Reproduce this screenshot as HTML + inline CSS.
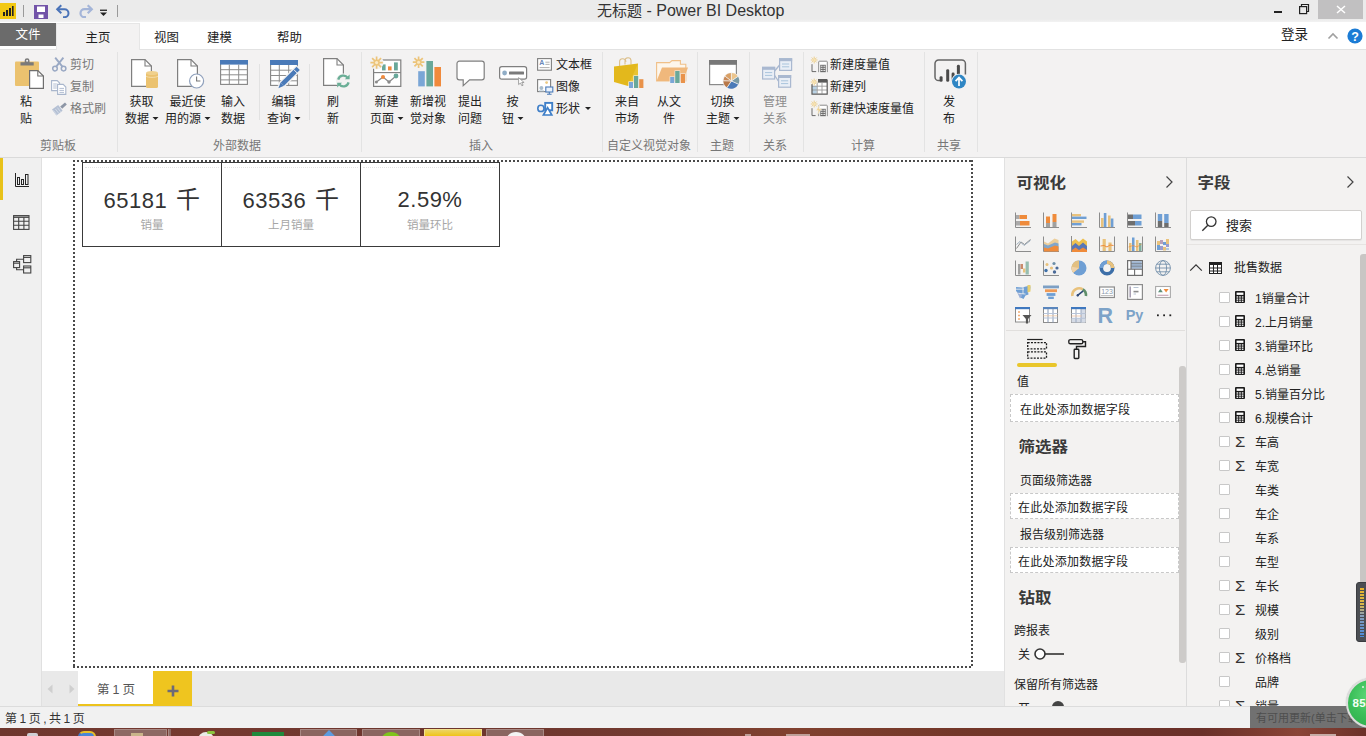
<!DOCTYPE html>
<html lang="zh-CN">
<head>
<meta charset="utf-8">
<title>无标题 - Power BI Desktop</title>
<style>
*{box-sizing:border-box;margin:0;padding:0}
html,body{width:1366px;height:736px;overflow:hidden;background:#f0f0f0}
body{position:relative;font-family:"Liberation Sans","Noto Sans CJK SC",sans-serif;font-size:12px;color:#222;line-height:1}
.abs{position:absolute}
/* title bar */
#titlebar{position:absolute;left:0;top:0;width:1366px;height:22px;background:linear-gradient(#ebebeb 0,#ebebeb 19px,#f2f2f2 22px)}
#title{position:absolute;left:597px;top:1px;font-size:16px;line-height:20px;color:#333;white-space:nowrap}
#title b{font-weight:normal;font-size:15px}
/* tab row */
#tabrow{position:absolute;left:0;top:22px;width:1366px;height:27px;background:#fff}
#filetab{position:absolute;left:0;top:1px;width:56px;height:23px;background:#6b6b6b;color:#fff;font-size:12.5px;line-height:25px;text-align:center}
#hometab{position:absolute;left:56px;top:1px;width:84px;height:27px;background:#f3f2f2;border:1px solid #e6e6e6;border-bottom:none;z-index:2}
#tabrow{z-index:2}
.tab{z-index:3}
.tab{position:absolute;top:7.5px;font-size:12.4px;line-height:16px;color:#222;white-space:nowrap}
/* ribbon */
#ribbon{position:absolute;left:0;top:49px;width:1366px;height:109px;background:#f3f2f2;border-top:1px solid #e2e2e2;border-bottom:1px solid #dadada}
#hometab + .x{}
.gsep{position:absolute;top:52px;width:1px;height:100px;background:#e3e3e3}
.ssep{position:absolute;top:64px;width:1px;height:56px;background:#e2e2e2}
.big{position:absolute;top:94px;text-align:center;font-size:12px;line-height:16.5px;color:#222;white-space:nowrap;transform:translateX(-50%)}
.big.dis{color:#8c8c8c}
.sm{position:absolute;font-size:12px;line-height:16px;color:#222;white-space:nowrap}
.sm.dis{color:#787878}
.glab{position:absolute;top:138px;font-size:12px;line-height:16px;color:#777;white-space:nowrap;transform:translateX(-50%)}
.dd{display:inline-block;width:0;height:0;border-left:3px solid transparent;border-right:3px solid transparent;border-top:3.5px solid #222;vertical-align:middle;margin-left:3px;position:relative;top:-1px}
/* left nav */
#leftnav{position:absolute;left:0;top:158px;width:42px;height:548px;background:#f0f0f0;border-right:1px solid #e0e0e0}
/* canvas */
#canvas{position:absolute;left:42px;top:158px;width:963px;height:513px;background:#fff}
#page{position:absolute;left:73px;top:160px;width:900px;height:508px;
background:
 repeating-linear-gradient(90deg,#4a4a4a 0,#4a4a4a 2px,transparent 2px,transparent 4px) top left/100% 2px no-repeat,
 repeating-linear-gradient(90deg,#4a4a4a 0,#4a4a4a 2px,transparent 2px,transparent 4px) bottom left/100% 2px no-repeat,
 repeating-linear-gradient(180deg,#4a4a4a 0,#4a4a4a 2px,transparent 2px,transparent 4px) top left/2px 100% no-repeat,
 repeating-linear-gradient(180deg,#4a4a4a 0,#4a4a4a 2px,transparent 2px,transparent 4px) top right/2px 100% no-repeat}
.card{position:absolute;top:162px;height:85px;width:140px;border:1px solid #3a3a3a;background:#fff;text-align:center}
.card:after{content:"";position:absolute;left:2px;right:2px;top:4px;border-top:1px dotted #e6e6e6}
.card .v{position:absolute;left:0;right:0;top:23px;font-size:22px;line-height:28px;color:#333;letter-spacing:.5px;white-space:nowrap}
.card .v b{font-weight:normal;font-size:24px;margin-left:2px;position:relative;top:0px}
.card .l{position:absolute;left:0;right:0;top:54px;font-size:11.5px;line-height:16px;color:#a6a6a6}
/* page tabs */
#pagetabs{position:absolute;left:42px;top:671px;width:963px;height:35px;background:#e9e9e9}
#ptab{position:absolute;left:78px;top:671px;width:75px;height:35px;background:#fff;border-bottom:2px solid #edc31c;text-align:center;font-size:12.5px;line-height:39px;color:#555;padding-left:1px}
#ptab i,#status i{font-style:normal;padding:0 2.5px}
#ptab i{padding:0 3px}
#padd{position:absolute;left:153px;top:671px;width:39px;height:35px;background:#efc51f}
/* status bar */
#status{position:absolute;left:0;top:706px;width:1366px;height:22px;background:#f1f1f1;border-top:1px solid #dcdcdc;font-size:12px;line-height:24px;padding-left:5px;color:#333}
#taskbar{position:absolute;left:0;top:728px;width:1366px;height:8px;overflow:hidden;background:linear-gradient(90deg,#6e372e 0,#763a30 15%,#6c352d 30%,#733a30 48%,#81412f 58%,#733729 70%,#6a3029 88%,#7c3b30 92%,#8a4537 95%,#6c3129 100%)}
/* right panes */
#vis{position:absolute;left:1004px;top:158px;width:182px;height:548px;background:#f3f2f1;border-left:1px solid #e1e1e1}
#fields{position:absolute;left:1186px;top:158px;width:180px;height:548px;background:#f3f2f1;border-left:1px solid #dcdcdc}
.ph{position:absolute;font-size:16.5px;font-weight:bold;line-height:20px;color:#3a3a3a;white-space:nowrap;transform:scaleY(.93);transform-origin:0 50%}
.fld{position:absolute;left:1255px;font-size:12px;line-height:16px;color:#222;white-space:nowrap}
.cb{position:absolute;left:1219px;width:11px;height:11px;border:1px solid #c8c8c8;background:#fff;border-radius:1px}
.sig{position:absolute;left:1235px;font-size:14.5px;line-height:16px;color:#333;transform:scaleX(1.15);transform-origin:0 50%}
.well{position:absolute;left:1010px;width:169px;height:27px;background:#fff;border:1px dashed #c8c8c8;font-size:12px;line-height:29px;letter-spacing:.25px;padding-left:7px;color:#222;white-space:nowrap}
.vt{position:absolute;font-size:12px;line-height:16px;color:#222;white-space:nowrap}
</style>
</head>
<body>
<div id="titlebar">
 <div id="title"><b>无标题</b> - Power BI Desktop</div>
</div>
<div id="tabrow">
 <div id="filetab">文件</div>
 <div id="hometab"></div>
 <div class="tab" style="left:85.5px">主页</div>
 <div class="tab" style="left:154px">视图</div>
 <div class="tab" style="left:207px">建模</div>
 <div class="tab" style="left:277px">帮助</div>
 <div class="tab" style="left:1281px;font-size:13.5px;top:5px">登录</div>
</div>
<div id="ribbon"></div>
<!-- title bar icons -->
<svg class="abs" style="left:0;top:3px" width="16" height="16" viewBox="0 0 16 16"><rect width="16" height="16" fill="#f2c811"/><rect x="3" y="9" width="2" height="4" fill="#222"/><rect x="6" y="7" width="2" height="6" fill="#222"/><rect x="9" y="5" width="2" height="8" fill="#222"/><rect x="12" y="3" width="1.6" height="10" fill="#222"/></svg>
<div class="abs" style="left:23px;top:5px;width:1px;height:12px;background:#9a9a9a"></div>
<svg class="abs" style="left:34px;top:5px" width="14" height="14" viewBox="0 0 14 14"><path d="M0.8 0.8h12.4v12.4H0.8z" fill="#fff" stroke="#7253a8" stroke-width="1.6"/><rect x="1" y="7" width="12" height="6" fill="#7253a8"/><rect x="4.5" y="9.5" width="5" height="3.5" fill="#fff"/><rect x="1" y="1" width="2" height="6" fill="#7253a8"/><rect x="11" y="1" width="2" height="6" fill="#7253a8"/></svg>
<svg class="abs" style="left:55px;top:4px" width="16" height="14" viewBox="0 0 16 14"><path d="M2 5.2h7.5a4 4 0 0 1 0 8H8" fill="none" stroke="#4a73b8" stroke-width="2"/><path d="M6.3 1.2L2.2 5.2l4.1 4" fill="none" stroke="#4a73b8" stroke-width="2"/></svg>
<svg class="abs" style="left:78px;top:4px" width="16" height="14" viewBox="0 0 16 14"><path d="M14 5.2H6.5a4 4 0 0 0 0 8H8" fill="none" stroke="#a4b5d8" stroke-width="2.200"/><path d="M9.7 1.2l4.1 4-4.1 4" fill="none" stroke="#a4b5d8" stroke-width="2.200"/></svg>
<svg class="abs" style="left:99px;top:9px" width="9" height="8" viewBox="0 0 9 8"><rect x="1" y="0.6" width="7" height="1.3" fill="#222"/><path d="M1 3.4h7L4.5 7z" fill="#222"/></svg>
<div class="abs" style="left:117px;top:5px;width:1px;height:12px;background:#9a9a9a"></div>
<!-- window controls -->
<div class="abs" style="left:1318px;top:0;width:45px;height:19px;background:#c1c0c1"></div>
<svg class="abs" style="left:1336px;top:5px" width="10" height="9" viewBox="0 0 10 9"><path d="M1 1l8 7M9 1l-8 7" stroke="#fff" stroke-width="1.500"/></svg>
<div class="abs" style="left:1274px;top:11px;width:8px;height:2px;background:#222"></div>
<svg class="abs" style="left:1298px;top:3px" width="12" height="12" viewBox="0 0 12 12"><path d="M3.5 3V1.5h7v7H9" fill="none" stroke="#222" stroke-width="1.2"/><rect x="1.6" y="3.6" width="7" height="7" fill="none" stroke="#222" stroke-width="1.2"/></svg>
<!-- tab row right -->
<svg class="abs" style="left:1327px;top:32px;z-index:3" width="12" height="8" viewBox="0 0 12 8"><path d="M1.5 6.5L6 2l4.5 4.5" fill="none" stroke="#a0a0a0" stroke-width="1.6"/></svg>
<svg class="abs" style="left:1347px;top:28px;z-index:3" width="16" height="16" viewBox="0 0 16 16"><circle cx="8" cy="8" r="7.6" fill="#1c7cd5"/><text x="8" y="12.6" font-size="12.5" font-weight="bold" text-anchor="middle" fill="#fff" font-family="Liberation Sans, sans-serif">?</text></svg>

<!-- separators -->
<div class="gsep" style="left:117px"></div>
<div class="ssep" style="left:259px"></div>
<div class="ssep" style="left:309px"></div>
<div class="gsep" style="left:361px"></div>
<div class="gsep" style="left:602px"></div>
<div class="gsep" style="left:697px"></div>
<div class="gsep" style="left:749px"></div>
<div class="gsep" style="left:803px"></div>
<div class="gsep" style="left:924px"></div>
<div class="gsep" style="left:977px"></div>

<!-- big labels -->
<div class="big" style="left:26px">粘<br>贴</div>
<div class="big" style="left:141.5px">获取<br>数据<i class="dd"></i></div>
<div class="big" style="left:187.5px">最近使<br>用的源<i class="dd"></i></div>
<div class="big" style="left:233px">输入<br>数据</div>
<div class="big" style="left:283.5px">编辑<br>查询<i class="dd"></i></div>
<div class="big" style="left:333px">刷<br>新</div>
<div class="big" style="left:386.5px">新建<br>页面<i class="dd"></i></div>
<div class="big" style="left:428px">新增视<br>觉对象</div>
<div class="big" style="left:470px">提出<br>问题</div>
<div class="big" style="left:512.5px">按<br>钮<i class="dd"></i></div>
<div class="big" style="left:627px">来自<br>市场</div>
<div class="big" style="left:669px">从文<br>件</div>
<div class="big" style="left:722.5px">切换<br>主题<i class="dd"></i></div>
<div class="big dis" style="left:775px">管理<br>关系</div>
<div class="big" style="left:949px">发<br>布</div>

<!-- small labels -->
<div class="sm dis" style="left:70px;top:57px">剪切</div>
<div class="sm dis" style="left:70px;top:79px">复制</div>
<div class="sm dis" style="left:70px;top:101px">格式刷</div>
<div class="sm" style="left:556px;top:57px">文本框</div>
<div class="sm" style="left:556px;top:79px">图像</div>
<div class="sm" style="left:556px;top:101px">形状<i class="dd" style="margin-left:5px"></i></div>
<div class="sm" style="left:830px;top:57px">新建度量值</div>
<div class="sm" style="left:830px;top:79px">新建列</div>
<div class="sm" style="left:830px;top:101px">新建快速度量值</div>

<!-- group labels -->
<div class="glab" style="left:58px">剪贴板</div>
<div class="glab" style="left:237px">外部数据</div>
<div class="glab" style="left:481px">插入</div>
<div class="glab" style="left:649px">自定义视觉对象</div>
<div class="glab" style="left:722px">主题</div>
<div class="glab" style="left:775px">关系</div>
<div class="glab" style="left:863px">计算</div>
<div class="glab" style="left:949px">共享</div>

<!-- RI-START -->
<svg class="abs" style="left:15px;top:58px;overflow:visible" width="30" height="32" viewBox="0 0 30 32"><rect x="0" y="3.5" width="24" height="24.5" rx="1" fill="#ebc26f"/><path d="M5.5 7.5V4.2h4.2V2.6a2.4 2.4 0 0 1 4.8 0v1.6h4.2v3.3z" fill="#7a7a7a"/><circle cx="12.1" cy="2.7" r="1" fill="#f3f2f2"/><path d="M14.6 12.6h8.2l5.6 5.4v12.3H14.6z" fill="#fff" stroke="#6f6f6f" stroke-width="1.2"/><path d="M22.8 12.6v5.4h5.6" fill="none" stroke="#6f6f6f" stroke-width="1.1"/></svg>
<svg class="abs" style="left:52px;top:57px;overflow:visible" width="15" height="15" viewBox="0 0 15 15"><g fill="none" stroke="#9aa9c4" stroke-width="1.5"><circle cx="3" cy="11.6" r="2.3"/><circle cx="11.6" cy="11.6" r="2.3"/></g><path d="M3.2 0.6L10.6 9.8M11.4 0.6L4 9.8" stroke="#9aa9c4" stroke-width="1.9"/></svg>
<svg class="abs" style="left:51px;top:80px;overflow:visible" width="16" height="15" viewBox="0 0 16 15"><path d="M0.6 0.6h5.6l2.4 2.4v7.6h-8z" fill="#fff" stroke="#a9b6cc" stroke-width="1.1"/><path d="M2.2 4h3.6M2.2 6h3.6M2.2 8h3.6" stroke="#a9b6cc" stroke-width=".9"/><path d="M6.6 4.4h5.6l2.6 2.6v7.4h-8.2z" fill="#fff" stroke="#a9b6cc" stroke-width="1.1"/><path d="M8.4 8.4h4.6M8.4 10.4h4.6M8.4 12.4h4.6" stroke="#a9b6cc" stroke-width=".9"/></svg>
<svg class="abs" style="left:51px;top:101px;overflow:visible" width="17" height="16" viewBox="0 0 17 16"><path d="M1 8.4L7.2 4l4.4 5.8-6.2 4.8z" fill="#b4c0d4"/><path d="M2.4 9.4l3.4 4.4M4.4 8l3.4 4.4M6.4 6.6l3.2 4.2" stroke="#dfe5ee" stroke-width=".7"/><path d="M9.2 5.6L14 1.4l1.8 2.2-4.6 4.2z" fill="#8d96a6"/></svg>
<svg class="abs" style="left:131px;top:59px;overflow:visible" width="28" height="30" viewBox="0 0 28 30"><path d="M0.6 0.6H14L20.4 7V27.4H0.6z" fill="#fff" stroke="#7f7f7f" stroke-width="1.2"/><path d="M14 0.6V7H20.4" fill="none" stroke="#7f7f7f" stroke-width="1.1"/><rect x="15" y="13.4" width="12" height="15.6" rx="1.6" fill="#ebc26f"/><ellipse cx="21" cy="14" rx="6" ry="2" fill="#f0d08c"/><path d="M15 17.2c2 1.6 10 1.6 12 0" fill="none" stroke="#f5dfae" stroke-width=".9"/></svg>
<svg class="abs" style="left:177px;top:59px;overflow:visible" width="28" height="30" viewBox="0 0 28 30"><path d="M0.6 0.6H14L20.4 7V27.4H0.6z" fill="#fff" stroke="#7f7f7f" stroke-width="1.2"/><path d="M14 0.6V7H20.4" fill="none" stroke="#7f7f7f" stroke-width="1.1"/><circle cx="19.6" cy="22" r="7" fill="#fff" stroke="#8fa0bc" stroke-width="1.2"/><path d="M19.6 17.4V22h3.8" fill="none" stroke="#777" stroke-width="1.1"/></svg>
<svg class="abs" style="left:220px;top:60px;overflow:visible" width="28" height="25" viewBox="0 0 28 25"><rect x="0.6" y="0.6" width="26.8" height="23.8" fill="#fff" stroke="#858585" stroke-width="1.1"/><rect x="0" y="0" width="28" height="4.6" fill="#4a7ab8"/><path d="M0.6 9.7H27.4" stroke="#8d8d8d" stroke-width="1"/><path d="M0.6 14.8H27.4" stroke="#8d8d8d" stroke-width="1"/><path d="M0.6 19.9H27.4" stroke="#8d8d8d" stroke-width="1"/><path d="M9.3 4.6V24.4" stroke="#8d8d8d" stroke-width="1"/><path d="M18.7 4.6V24.4" stroke="#8d8d8d" stroke-width="1"/></svg>
<svg class="abs" style="left:270px;top:60px;overflow:visible" width="30" height="30" viewBox="0 0 30 30"><rect x="0.6" y="0.6" width="26.8" height="24.8" fill="#fff" stroke="#858585" stroke-width="1.1"/><rect x="0" y="0" width="28" height="5" fill="#4a7ab8"/><path d="M0.6 10.2H27.4" stroke="#8d8d8d" stroke-width="1"/><path d="M0.6 15.5H27.4" stroke="#8d8d8d" stroke-width="1"/><path d="M0.6 20.8H27.4" stroke="#8d8d8d" stroke-width="1"/><path d="M9.3 5V25.4" stroke="#8d8d8d" stroke-width="1"/><path d="M18.7 5V25.4" stroke="#8d8d8d" stroke-width="1"/><path d="M29 7.600L9.600 27" stroke="#f3f2f2" stroke-width="7.400"/><path d="M28.200 8.400L12.400 24.200" stroke="#4a7ab8" stroke-width="4.600"/><path d="M10.600 22.400l3.400 3.400-5.600 2.400z" fill="#4a7ab8"/><path d="M23.600 9.400l3.800 3.800" stroke="#f3f2f2" stroke-width="1"/></svg>
<svg class="abs" style="left:323px;top:58px;overflow:visible" width="30" height="31" viewBox="0 0 30 31"><path d="M0.6 0.6H14L20.4 7V27.4H0.6z" fill="#fff" stroke="#7f7f7f" stroke-width="1.2"/><path d="M14 0.6V7H20.4" fill="none" stroke="#7f7f7f" stroke-width="1.1"/><circle cx="20.4" cy="23" r="7.6" fill="#f3f2f2"/><g fill="none" stroke="#6aae96" stroke-width="2.3"><path d="M15.2 21.6a5.4 5.4 0 0 1 9.6-1.8"/><path d="M25.6 24.4a5.4 5.4 0 0 1-9.6 1.8"/></g><path d="M26.6 16.4v4.8h-4.8z" fill="#6aae96"/><path d="M14.2 29.6v-4.8h4.8z" fill="#6aae96"/></svg>
<svg class="abs" style="left:370px;top:56px;overflow:visible" width="32" height="31" viewBox="0 0 32 31"><rect x="3.6" y="4" width="27.2" height="26.4" fill="#fff" stroke="#7f7f7f" stroke-width="1.2"/><path d="M3.6 16.6h27.2" stroke="#7f7f7f" stroke-width="1.1"/><rect x="12" y="8.4" width="3.6" height="6" fill="#69a89a"/><rect x="18" y="10.4" width="3.6" height="4" fill="#f08a3c"/><rect x="24" y="6.4" width="3.8" height="8" fill="#69a89a"/><path d="M6.4 26l6.6-5 6 5 7-6" fill="none" stroke="#8a8a8a" stroke-width="1.3"/><circle cx="6.4" cy="26" r="1.5" fill="#8a8a8a"/><circle cx="13" cy="21" r="2" fill="#f08a3c"/><circle cx="19" cy="26" r="1.7" fill="#8a8a8a"/><circle cx="26" cy="20" r="2.4" fill="#69a89a"/><circle cx="6.6" cy="6.6" r="7" fill="#f3f2f2"/><g stroke="#ecc47a" stroke-width="1.7"><path d="M0.39999999999999947 6.6H12.8M6.6 0.39999999999999947V12.8M2.136 2.136L11.064 11.064M2.136 11.064L11.064 2.136"/></g><circle cx="6.6" cy="6.6" r="3.1" fill="#ecc47a"/><circle cx="6.6" cy="6.6" r="1.612" fill="#fbe9c4"/></svg>
<svg class="abs" style="left:412px;top:56px;overflow:visible" width="30" height="31" viewBox="0 0 30 31"><g stroke="#ecc47a" stroke-width="1.7"><path d="M0.7999999999999998 6.2H12.399999999999999M6.6 0.40000000000000036V12.0M2.4239999999999995 2.024L10.776 10.376000000000001M2.4239999999999995 10.376000000000001L10.776 2.024"/></g><circle cx="6.6" cy="6.2" r="2.9" fill="#ecc47a"/><circle cx="6.6" cy="6.2" r="1.508" fill="#fbe9c4"/><rect x="6.2" y="15.2" width="6.6" height="15.2" fill="#7aa6d6"/><rect x="14.4" y="5" width="6.6" height="25.4" fill="#69a89a"/><rect x="22.4" y="11" width="6.6" height="19.4" fill="#f08a3c"/></svg>
<svg class="abs" style="left:456px;top:60px;overflow:visible" width="30" height="27" viewBox="0 0 30 27"><path d="M3.4 1.2h22.4a2.4 2.4 0 0 1 2.4 2.4v13.8a2.4 2.4 0 0 1-2.4 2.4H13.6L7.2 25.6V19.8H3.4a2.4 2.4 0 0 1-2.4-2.4V3.6a2.4 2.4 0 0 1 2.4-2.4z" fill="#fff" stroke="#7f7f7f" stroke-width="1.2"/></svg>
<svg class="abs" style="left:499px;top:66px;overflow:visible" width="30" height="21" viewBox="0 0 30 21"><rect x="0.6" y="0.6" width="27" height="12.6" rx="2.2" fill="#fff" stroke="#7f7f7f" stroke-width="1.2"/><circle cx="5.6" cy="7" r="2.4" fill="#90adc6"/><rect x="10" y="5.4" width="15" height="3.2" rx="0.6" fill="#7a7a7a"/><path d="M19.6 11.6v7l1.8-1.6 1.5 2.8 1.2-.6-1.4-2.7h2.4z" fill="#fff" stroke="#999" stroke-width=".9"/></svg>
<svg class="abs" style="left:537px;top:58px;overflow:visible" width="16" height="13" viewBox="0 0 16 13"><rect x="0.6" y="0.6" width="13.800" height="11.600" fill="#fff" stroke="#7f7f7f" stroke-width="1.1"/><text x="2.200" y="7.400" font-size="7" font-weight="bold" fill="#6a88b8" font-family="Liberation Sans, sans-serif">A</text><path d="M8.400 4.200h4.200M8.400 6.400h4.200M2.600 9.600h10" stroke="#a8a8a8" stroke-width=".9"/></svg>
<svg class="abs" style="left:537px;top:79px;overflow:visible" width="17" height="16" viewBox="0 0 17 16"><rect x="0.6" y="0.6" width="13" height="12" fill="#fff" stroke="#7f7f7f" stroke-width="1.1"/><circle cx="4.4" cy="9" r="2" fill="#a9bccc"/><path d="M2 12h5" stroke="#a9bccc"/><circle cx="9.6" cy="3.6" r="1.4" fill="#ecc982"/><rect x="8.800" y="8" width="7" height="5" fill="#eaf2fb" stroke="#4a7ab8" stroke-width="1.1"/><path d="M12.300 13v2M10 15.200h4.600" stroke="#4a7ab8" stroke-width="1.1"/></svg>
<svg class="abs" style="left:537px;top:102px;overflow:visible" width="17" height="15" viewBox="0 0 17 15"><circle cx="3.900" cy="6.400" r="3.100" fill="none" stroke="#3f7fc8" stroke-width="1.600"/><rect x="8.200" y="0.900" width="7" height="7.400" fill="#fff" stroke="#3f7fc8" stroke-width="1.900"/><path d="M10.600 5.600l4.200 7.400H6.400z" fill="#fff" stroke="#3f7fc8" stroke-width="1.700"/></svg>
<svg class="abs" style="left:613px;top:56px;overflow:visible" width="32" height="33" viewBox="0 0 32 33"><path d="M6.6 10.4V6.2a3.2 3.2 0 0 1 6.4-.4M12 8.6V4.8a3 3 0 0 1 6-.2v4" fill="none" stroke="#dcbf8a" stroke-width="1.1"/><path d="M1 10.6L25 7.4v17.4L15 30 1 26z" fill="#e3b81c"/><path d="M25 7.4v17.4L15 30z" fill="#e9c332"/><rect x="15.4" y="25.4" width="5" height="7" fill="#f3f2f2"/><rect x="20.4" y="19.4" width="5.4" height="13" fill="#f3f2f2"/><rect x="25.6" y="22.6" width="5.4" height="10" fill="#f3f2f2"/><rect x="16" y="26" width="4" height="6" fill="#7aa6d6"/><rect x="21" y="20" width="4.2" height="12" fill="#69a89a"/><rect x="26.2" y="23.2" width="4.2" height="8.8" fill="#e9924a"/></svg>
<svg class="abs" style="left:656px;top:60px;overflow:visible" width="33" height="25" viewBox="0 0 33 25"><path d="M0.6 2.6h13l2.4-2h8.4v3.6h5.4V21H0.6z" fill="#fdf6ec" stroke="#f0c088" stroke-width="1.1"/><path d="M0.6 21L6 7.6h26L27 21z" fill="#f0b87c"/><rect x="13.6" y="16.4" width="5" height="7" fill="#f3f2f2" opacity=".9"/><rect x="18.6" y="10.4" width="5.6" height="13" fill="#f3f2f2" opacity=".9"/><rect x="24.2" y="13.4" width="5.4" height="10" fill="#f3f2f2" opacity=".9"/><rect x="14.2" y="17" width="4" height="6" fill="#7aa6d6"/><rect x="19.2" y="11" width="4.4" height="12" fill="#69a89a"/><rect x="24.8" y="14" width="4.2" height="9" fill="#e9924a"/></svg>
<svg class="abs" style="left:709px;top:60px;overflow:visible" width="32" height="30" viewBox="0 0 32 30"><rect x="0.6" y="0.6" width="26.8" height="24" fill="#fff" stroke="#8a8a8a" stroke-width="1.2"/><rect x="0" y="0" width="28" height="4.8" fill="#787878"/><circle cx="22.4" cy="21" r="8.8" fill="#f3f2f2"/><path d="M22.4 21V13a8 8 0 0 0-6.4 3.2z" fill="#d9a066"/><path d="M22.4 21V13a8 8 0 0 1 6.6 3.4z" fill="#ecc58c"/><path d="M22.4 21l6.6-4.6a8 8 0 0 1 .4 7.8z" fill="#7a9aa4"/><path d="M22.4 21l7 3.2a8 8 0 0 1-11.4 3.4z" fill="#4a7ab8"/><path d="M22.4 21l-4.4 6.600a8 8 0 0 1-3.600-6.600z" fill="#b87848"/><path d="M22.4 21l-8-.2a8 8 0 0 1 1.600-4.600z" fill="#c98a58"/><path d="M22.400 21V13M22.400 21l6.600-4.600M22.400 21l7 3.200M22.400 21l-4.400 6.600M22.400 21l-8-.2M22.400 21l-6.400-4.800" stroke="#f3f2f2" stroke-width=".8"/></svg>
<svg class="abs" style="left:762px;top:58px;overflow:visible" width="31" height="30" viewBox="0 0 31 30"><path d="M11 15L17.600 7M11 15L17 24" stroke="#a9b8d0" stroke-width="1.3"/><rect x="0.6" y="9.4" width="12" height="11.6" fill="#e9eef6" stroke="#a9b8d0" stroke-width="1.2"/><rect x="0.0" y="8.8" width="13.2" height="3" fill="#a9b8d0"/><path d="M3.0 14.600000000000001h7.2M3.0 17.4h7.2" stroke="#a9c4dc" stroke-width="1"/><rect x="17.6" y="0.8" width="12" height="11.6" fill="#e9eef6" stroke="#a9b8d0" stroke-width="1.2"/><rect x="17.0" y="0.20000000000000007" width="13.2" height="3" fill="#a9b8d0"/><path d="M20.0 6.0h7.2M20.0 8.8h7.2" stroke="#a9c4dc" stroke-width="1"/><rect x="16.6" y="17.6" width="12" height="11.6" fill="#e9eef6" stroke="#a9b8d0" stroke-width="1.2"/><rect x="16.0" y="17.0" width="13.2" height="3" fill="#a9b8d0"/><path d="M19.0 22.8h7.2M19.0 25.6h7.2" stroke="#a9c4dc" stroke-width="1"/></svg>
<svg class="abs" style="left:811px;top:56px;overflow:visible" width="18" height="17" viewBox="0 0 18 17"><g stroke="#edcf8c" stroke-width="1"><path d="M-0.19999999999999973 4H6.6M3.2 0.6000000000000001V7.4M0.7520000000000002 1.552L5.648 6.448M0.7520000000000002 6.448L5.648 1.552"/></g><circle cx="3.2" cy="4" r="1.02" fill="#fbe6b4"/><path d="M1 8.200v7.400h4.200" fill="none" stroke="#6a6a6a" stroke-width="1"/><path d="M7.7 16.2V6.0a.8 .8 0 0 1 .8 -.8h7a.8 .8 0 0 1 .8 .8V16.2" fill="#fff" stroke="#8a8a8a" stroke-width="1"/><rect x="9.2" y="8.8" width="5.600" height="7.400" fill="#6a6a6a"/><rect x="9.80" y="9.70" width="1" height="1.100" fill="#fff"/><rect x="11.50" y="9.70" width="1" height="1.100" fill="#fff"/><rect x="13.20" y="9.70" width="1" height="1.100" fill="#fff"/><rect x="9.80" y="11.80" width="1" height="1.100" fill="#fff"/><rect x="11.50" y="11.80" width="1" height="1.100" fill="#fff"/><rect x="13.20" y="11.80" width="1" height="1.100" fill="#fff"/><rect x="9.80" y="13.90" width="1" height="1.100" fill="#fff"/><rect x="11.50" y="13.90" width="1" height="1.100" fill="#fff"/><rect x="13.20" y="13.90" width="1" height="1.100" fill="#fff"/></svg>
<svg class="abs" style="left:811px;top:78px;overflow:visible" width="18" height="17" viewBox="0 0 18 17"><rect x="1" y="4.600" width="14.800" height="11.400" fill="#fff"/><rect x="7" y="1" width="9" height="3.600" fill="#5a5a5a"/><rect x="1.200" y="8" width="4.600" height="7.600" fill="#b9d3e6"/><path d="M6.200 4.600v11M11 4.600v11M1 8.200h15M1 12h15" stroke="#9a9a9a" stroke-width=".9"/><path d="M1 6v10.200h15.200V1.400" fill="none" stroke="#5a5a5a" stroke-width="1.200"/><g stroke="#edcf8c" stroke-width="1"><path d="M-0.19999999999999973 4H6.6M3.2 0.6000000000000001V7.4M0.7520000000000002 1.552L5.648 6.448M0.7520000000000002 6.448L5.648 1.552"/></g><circle cx="3.2" cy="4" r="1.02" fill="#fbe6b4"/></svg>
<svg class="abs" style="left:811px;top:100px;overflow:visible" width="18" height="17" viewBox="0 0 18 17"><g stroke="#edcf8c" stroke-width="1"><path d="M-0.19999999999999973 4H6.6M3.2 0.6000000000000001V7.4M0.7520000000000002 1.552L5.648 6.448M0.7520000000000002 6.448L5.648 1.552"/></g><circle cx="3.2" cy="4" r="1.02" fill="#fbe6b4"/><path d="M1 8.200v7.400h3.600" fill="none" stroke="#6a6a6a" stroke-width="1"/><path d="M7.7 16.2V6.0a.8 .8 0 0 1 .8 -.8h7a.8 .8 0 0 1 .8 .8V16.2" fill="#fff" stroke="#8a8a8a" stroke-width="1"/><rect x="9.2" y="8.8" width="5.600" height="7.400" fill="#6a6a6a"/><rect x="9.80" y="9.70" width="1" height="1.100" fill="#fff"/><rect x="11.50" y="9.70" width="1" height="1.100" fill="#fff"/><rect x="13.20" y="9.70" width="1" height="1.100" fill="#fff"/><rect x="9.80" y="11.80" width="1" height="1.100" fill="#fff"/><rect x="11.50" y="11.80" width="1" height="1.100" fill="#fff"/><rect x="13.20" y="11.80" width="1" height="1.100" fill="#fff"/><rect x="9.80" y="13.90" width="1" height="1.100" fill="#fff"/><rect x="11.50" y="13.90" width="1" height="1.100" fill="#fff"/><rect x="13.20" y="13.90" width="1" height="1.100" fill="#fff"/><path d="M8.600 4.600l-3.400 5.800h2.400l-1.800 5.400 4.800-7H8z" fill="#f0d28c" stroke="#f3f2f2" stroke-width=".5"/></svg>
<svg class="abs" style="left:934px;top:59px;overflow:visible" width="34" height="31" viewBox="0 0 34 31"><path d="M6 21.600H4.600A3.600 3.600 0 0 1 1 18V4.600A3.600 3.600 0 0 1 4.600 1h23.200A3.600 3.600 0 0 1 31.400 4.600v11" fill="none" stroke="#666" stroke-width="1.500"/><g fill="#4a4a4a"><rect x="5.600" y="17.200" width="3" height="5.600" rx="1.400"/><rect x="12.200" y="10.200" width="3" height="12.600" rx="1.400"/><rect x="17.600" y="13.600" width="3" height="9.200" rx="1.400"/><rect x="22.900" y="5.800" width="3" height="12" rx="1.400"/></g><circle cx="25" cy="22.600" r="7.800" fill="#f3f2f2"/><circle cx="25" cy="22.600" r="7" fill="#2f86c4"/><path d="M25 27v-8M21.600 22.200l3.400-3.600 3.400 3.600" fill="none" stroke="#fff" stroke-width="1.700"/></svg>
<!-- RI-END -->
<div id="leftnav"></div>
<div class="abs" style="left:0;top:158px;width:3px;height:42px;background:#e8c21a"></div>
<svg class="abs" style="left:14px;top:172px" width="16" height="16" viewBox="0 0 16 16"><g fill="none" stroke="#252525" stroke-width="1"><path d="M1.5 1v13.500H15"/><rect x="3.500" y="5.500" width="2" height="7"/><rect x="7.500" y="7.500" width="2" height="5"/><rect x="11.500" y="2.500" width="2.500" height="10"/></g></svg>
<svg class="abs" style="left:13px;top:215px" width="17" height="15" viewBox="0 0 17 15"><g fill="none" stroke="#444" stroke-width="1.1"><rect x="0.600" y="0.600" width="15.400" height="13.800"/><path d="M0.600 2.200H16" stroke-width="1.4"/><path d="M0.600 6.300H16M0.600 10.300H16M5.700 2.200v12.200M10.900 2.200v12.200"/></g></svg>
<svg class="abs" style="left:13px;top:255px" width="19" height="19" viewBox="0 0 19 19"><g fill="none" stroke="#444" stroke-width="1.1"><rect x="0.600" y="6.600" width="6" height="6"/><path d="M0.600 8.200h6" /><rect x="10.600" y="0.600" width="7.200" height="7"/><path d="M10.600 2.400h7.200"/><rect x="10.600" y="11" width="7.200" height="7"/><path d="M10.600 12.800h7.200"/><path d="M3.600 6.600V4.200h7M3.600 12.600v2.200h7"/></g></svg>

<div id="canvas"></div>
<div id="page"></div>
<div class="card" style="left:82px"><div class="v">65181 <b>千</b></div><div class="l">销量</div></div>
<div class="card" style="left:221px"><div class="v">63536 <b>千</b></div><div class="l">上月销量</div></div>
<div class="card" style="left:360px"><div class="v">2.59%</div><div class="l">销量环比</div></div>
<div id="pagetabs"></div>
<div id="ptab">第<i>1</i>页</div>
<div id="padd"><svg class="abs" style="left:14px;top:14px" width="12" height="12" viewBox="0 0 12 12"><path d="M6 0.500v11M0.500 6h11" stroke="#6d6a78" stroke-width="2.600"/></svg></div>
<svg class="abs" style="left:47px;top:684px" width="6" height="10" viewBox="0 0 6 10"><path d="M5.500 0.500v9L0.500 5z" fill="#cfcfcf"/></svg>
<svg class="abs" style="left:69px;top:684px" width="6" height="10" viewBox="0 0 6 10"><path d="M0.500 0.500v9L5.500 5z" fill="#cfcfcf"/></svg>
<div id="vis"></div>
<div id="fields"></div>
<!-- PANES-START -->
<div class="ph" style="left:1016.5px;top:171.5px">可视化</div>
<svg class="abs" style="left:1164px;top:175px" width="10" height="14" viewBox="0 0 10 14"><path d="M2.5 1.5L8 7l-5.5 5.5" fill="none" stroke="#444" stroke-width="1.2"/></svg>
<div class="ph" style="left:1197.5px;top:171.5px">字段</div>
<svg class="abs" style="left:1345px;top:175px" width="10" height="14" viewBox="0 0 10 14"><path d="M2.5 1.5L8 7l-5.5 5.5" fill="none" stroke="#444" stroke-width="1.2"/></svg>
<!-- VIS-START -->
<svg class="abs" style="left:1015px;top:212px;overflow:visible" width="16" height="16" viewBox="0 0 16 16"><path d="M0.5 0.5v15h15.5" fill="none" stroke="#8c8c8c" stroke-width="1"/><rect x="1" y="3" width="3.5" height="4" fill="#8c8c8c" opacity=".7"/><rect x="4.5" y="3" width="7.5" height="4" fill="#ef8b3b"/><rect x="1" y="9" width="4" height="4.5" fill="#8c8c8c" opacity=".7"/><rect x="5" y="9" width="9.5" height="4.5" fill="#ef8b3b"/></svg>
<svg class="abs" style="left:1043px;top:212px;overflow:visible" width="16" height="16" viewBox="0 0 16 16"><path d="M0.5 0.5v15h15.5" fill="none" stroke="#8c8c8c" stroke-width="1"/><rect x="3" y="4.5" width="4" height="6.5" fill="#ef8b3b"/><rect x="3" y="11" width="4" height="4" fill="#8c8c8c" opacity=".8"/><rect x="9.5" y="2" width="4" height="8" fill="#ef8b3b"/><rect x="9.5" y="10" width="4" height="5" fill="#8c8c8c" opacity=".8"/></svg>
<svg class="abs" style="left:1071px;top:212px;overflow:visible" width="16" height="16" viewBox="0 0 16 16"><path d="M0.5 0.5v15h15.5" fill="none" stroke="#8c8c8c" stroke-width="1"/><rect x="1" y="2" width="9" height="2.4" fill="#e9c27c"/><rect x="1" y="4.6" width="14.5" height="2.4" fill="#6f9fd4"/><rect x="1" y="8.4" width="12" height="2.4" fill="#e9c27c"/><rect x="1" y="11" width="9.5" height="2.4" fill="#6f9fd4"/></svg>
<svg class="abs" style="left:1099px;top:212px;overflow:visible" width="16" height="16" viewBox="0 0 16 16"><path d="M0.5 0.5v15h15.5" fill="none" stroke="#8c8c8c" stroke-width="1"/><rect x="2" y="6" width="2.6" height="9" fill="#e9c27c"/><rect x="4.8" y="1" width="2.6" height="14" fill="#6f9fd4"/><rect x="9" y="3.5" width="2.6" height="11.5" fill="#e9c27c"/><rect x="11.8" y="6.5" width="2.6" height="8.5" fill="#6f9fd4"/></svg>
<svg class="abs" style="left:1127px;top:212px;overflow:visible" width="16" height="16" viewBox="0 0 16 16"><path d="M0.5 0.5v15h15.5" fill="none" stroke="#8c8c8c" stroke-width="1"/><rect x="1" y="2.5" width="5" height="4.5" fill="#6e6e6e"/><rect x="6" y="2.5" width="8.5" height="4.5" fill="#6f9fd4"/><rect x="1" y="9" width="7" height="4.5" fill="#6e6e6e"/><rect x="8" y="9" width="6.5" height="4.5" fill="#6f9fd4"/></svg>
<svg class="abs" style="left:1155px;top:212px;overflow:visible" width="16" height="16" viewBox="0 0 16 16"><path d="M0.5 0.5v15h15.5" fill="none" stroke="#8c8c8c" stroke-width="1"/><rect x="2.8" y="2" width="4.4" height="7" fill="#6f9fd4"/><rect x="2.8" y="9" width="4.4" height="6" fill="#6e6e6e"/><rect x="9.2" y="2" width="4.4" height="9" fill="#6f9fd4"/><rect x="9.2" y="11" width="4.4" height="4" fill="#6e6e6e"/></svg>
<svg class="abs" style="left:1015px;top:236px;overflow:visible" width="16" height="16" viewBox="0 0 16 16"><path d="M0.5 0.5v15h15.5" fill="none" stroke="#8c8c8c" stroke-width="1"/><path d="M1.5 12.5L6 6l3.5 2.5L15.5 3.5" fill="none" stroke="#8c8c8c" stroke-width="1"/><path d="M1.5 8.5L5 5.5l4 4 6.5-5" fill="none" stroke="#9ab" stroke-width="0.9"/></svg>
<svg class="abs" style="left:1043px;top:236px;overflow:visible" width="16" height="16" viewBox="0 0 16 16"><path d="M0.5 0.5v15h15.5" fill="none" stroke="#8c8c8c" stroke-width="1"/><path d="M1 5.5L5 7.5 11.5 2.5 15.5 4V15H1z" fill="#e9c27c" opacity=".75"/><path d="M1 8L5 9.5 12 6.5 15.5 7.5V15H1z" fill="#6f9fd4" opacity=".85"/><path d="M1 11.5L5 12.5 12 9.5 15.5 10.5V15.5H1z" fill="#ef8b3b"/></svg>
<svg class="abs" style="left:1071px;top:236px;overflow:visible" width="16" height="16" viewBox="0 0 16 16"><path d="M0.5 0v16" stroke="#8c8c8c"/><path d="M1 5.5L4.5 3 8 6 12 2.5 16 5.5V16H1z" fill="#edc04f"/><path d="M1 10L4.5 7 8 10 12 6.5 16 10V16H1z" fill="#5877b8"/><path d="M1 14L4.5 11.5 8 14 12 11.5 16 14V16H1z" fill="#ef8b3b"/></svg>
<svg class="abs" style="left:1099px;top:236px;overflow:visible" width="16" height="16" viewBox="0 0 16 16"><path d="M0.5 0.5v15h15v-15" fill="none" stroke="#8c8c8c" stroke-width="1"/><rect x="3.6" y="3" width="3.2" height="12" fill="#e9c27c"/><rect x="9.4" y="6.5" width="3.2" height="8.5" fill="#e9c27c"/><path d="M1.5 10L5 9.5 8 11 11 9 14.5 9.5" fill="none" stroke="#ef8b3b" stroke-width="1"/></svg>
<svg class="abs" style="left:1127px;top:236px;overflow:visible" width="16" height="16" viewBox="0 0 16 16"><path d="M0.5 0.5v15h15v-15" fill="none" stroke="#8c8c8c" stroke-width="1"/><rect x="2" y="7" width="2.5" height="8" fill="#e9c27c"/><rect x="5" y="1.5" width="2.5" height="13.5" fill="#6f9fd4"/><rect x="9" y="4" width="2.5" height="11" fill="#e9c27c"/><rect x="12" y="7" width="2.5" height="8" fill="#7fb0a0"/><path d="M1.5 11L6 9.5 10 11 14.5 8" fill="none" stroke="#ef8b3b" stroke-width="0.8" opacity=".8"/></svg>
<svg class="abs" style="left:1155px;top:236px;overflow:visible" width="16" height="16" viewBox="0 0 16 16"><path d="M0.5 0.5v15h15.5" fill="none" stroke="#8c8c8c" stroke-width="1"/><rect x="2" y="5" width="3" height="4" fill="#e9c27c"/><rect x="2" y="9" width="3" height="5" fill="#6f9fd4"/><rect x="5" y="4" width="3" height="4" fill="#b9a0b8"/><rect x="5" y="10" width="3" height="4" fill="#9c9ccc"/><rect x="8" y="6" width="3" height="3" fill="#6f9fd4"/><rect x="8" y="11" width="3" height="3.5" fill="#e9c27c"/><rect x="11" y="3" width="3" height="5" fill="#e9c27c"/><rect x="11" y="8" width="3" height="3" fill="#9c9ccc"/><rect x="11" y="12" width="3" height="2" fill="#6f9fd4" opacity=".5"/></svg>
<svg class="abs" style="left:1015px;top:260px;overflow:visible" width="16" height="16" viewBox="0 0 16 16"><path d="M0.5 0.5v15h15.5" fill="none" stroke="#8c8c8c" stroke-width="1"/><rect x="3" y="4" width="2.4" height="10.5" fill="#8c8c8c" opacity=".8"/><rect x="5.6" y="4" width="2.4" height="5" fill="#c98a6a"/><rect x="8" y="8.5" width="2.4" height="4" fill="#e9c27c"/><rect x="10.6" y="1.5" width="3.2" height="13" fill="#7fb0a0" opacity=".8"/></svg>
<svg class="abs" style="left:1043px;top:260px;overflow:visible" width="16" height="16" viewBox="0 0 16 16"><path d="M0.5 0.5v15h15.5" fill="none" stroke="#8c8c8c" stroke-width="1"/><circle cx="4" cy="4.5" r="1.5" fill="#e9c27c"/><circle cx="11" cy="3.5" r="1.6" fill="#6d8fa8"/><circle cx="8.5" cy="8" r="1.6" fill="#e9c27c"/><circle cx="3" cy="10.5" r="1.7" fill="#3d6fa8"/><circle cx="14" cy="8" r="1.6" fill="#4a6a98"/><circle cx="11.5" cy="12" r="1.7" fill="#4a6a98"/></svg>
<svg class="abs" style="left:1071px;top:260px;overflow:visible" width="16" height="16" viewBox="0 0 16 16"><circle cx="8" cy="8" r="7.5" fill="#6f9fd4"/><path d="M8 8V0.5A7.5 7.5 0 0 0 2.2 12.8z" fill="#e9c27c" opacity=".95"/><path d="M8 8L2.2 12.8A7.5 7.5 0 0 1 0.6 6.8z" fill="#f0d2a8"/><path d="M8 8V0.5A7.5 7.5 0 0 1 9.5 0.65 9 9 0 0 1 5.2 14.9 7.5 7.5 0 0 1 2.2 12.8z" fill="#f3f2f1" opacity="0"/></svg>
<svg class="abs" style="left:1099px;top:260px;overflow:visible" width="16" height="16" viewBox="0 0 16 16"><circle cx="8" cy="8" r="5.7" fill="none" stroke="#3d6fa8" stroke-width="3.6"/><path d="M8 2.3A5.7 5.7 0 0 1 13.7 8" fill="none" stroke="#e9c27c" stroke-width="3.6"/><path d="M2.3 8A5.7 5.7 0 0 1 8 2.3" fill="none" stroke="#6f9fd4" stroke-width="3.6"/></svg>
<svg class="abs" style="left:1127px;top:260px;overflow:visible" width="16" height="16" viewBox="0 0 16 16"><rect x="0.6" y="0.6" width="14.8" height="14.8" fill="#fff" stroke="#6e6e6e" stroke-width="1.2"/><rect x="4" y="1.2" width="10.8" height="7.6" fill="#9db4cf"/><path d="M0.6 9.2h14.8M7.6 9.2v6.2M4 1v8" stroke="#6e6e6e" stroke-width="1.1"/><path d="M4 3.6h11M4 6.2h11" stroke="#6e6e6e" stroke-width=".6"/></svg>
<svg class="abs" style="left:1155px;top:260px;overflow:visible" width="16" height="16" viewBox="0 0 16 16"><g fill="none" stroke="#6d8aa6" stroke-width=".85"><circle cx="8" cy="8" r="7.4"/><ellipse cx="8" cy="8" rx="3.6" ry="7.4"/><path d="M0.6 8h14.8M1.8 4.2h12.4M1.8 11.8h12.4"/></g></svg>
<svg class="abs" style="left:1015px;top:284px;overflow:visible" width="16" height="16" viewBox="0 0 16 16"><path d="M1 3l6 .5L13 2l2.5.5-.5 4-2 1 .5 3-3 1-2 3.5-3-1.5L3 9 1 7z" fill="#6f9fd4"/><path d="M12.5 1h3v6.5l-3 1z" fill="#e9cf6e"/><path d="M2 8l4 1 1 3-2 2.5z" fill="#9ab0d8"/><path d="M1 5.2h8M8 3v7M3.5 9.5l7 .5" stroke="#f3f2f1" stroke-width=".8"/></svg>
<svg class="abs" style="left:1043px;top:284px;overflow:visible" width="16" height="16" viewBox="0 0 16 16"><rect x="0" y="1.5" width="16" height="2.8" fill="#7d9fc4"/><rect x="2" y="5.3" width="12" height="2.8" fill="#ef8b3b" opacity=".85"/><rect x="3.6" y="9.1" width="8.8" height="2.8" fill="#6f9fd4"/><rect x="5.2" y="12.6" width="5.6" height="2.4" fill="#6f9fd4"/></svg>
<svg class="abs" style="left:1071px;top:284px;overflow:visible" width="16" height="16" viewBox="0 0 16 16"><path d="M1.4 12A6.8 6.8 0 0 1 11.8 5.4" fill="none" stroke="#e9c27c" stroke-width="2.6"/><path d="M11.8 5.4A6.8 6.8 0 0 1 14.9 12" fill="none" stroke="#5f8f6a" stroke-width="2.6"/><path d="M6.6 11.4L11.6 7.4" stroke="#2f4a78" stroke-width="1.6" stroke-linecap="round"/><circle cx="6.8" cy="11.3" r="1.2" fill="#2f4a78"/></svg>
<svg class="abs" style="left:1099px;top:284px;overflow:visible" width="16" height="16" viewBox="0 0 16 16"><rect x="0.6" y="3" width="14.8" height="10.5" fill="#fff" stroke="#8c8c8c" stroke-width="1.2"/><path d="M2 11.6h12" stroke="#bbb" stroke-width="1"/><text x="8" y="10.2" font-size="7" text-anchor="middle" fill="#8a9aac" font-family="Liberation Sans, sans-serif">123</text></svg>
<svg class="abs" style="left:1127px;top:284px;overflow:visible" width="16" height="16" viewBox="0 0 16 16"><rect x="0.6" y="0.6" width="14.8" height="14.8" fill="#fff" stroke="#8c8c8c" stroke-width="1.2"/><path d="M3.2 2.5v11" stroke="#a9a0b4" stroke-width="1.6"/><path d="M6.5 3.5h5M6.5 10h2.5" stroke="#b8c4d4" stroke-width="1"/><path d="M6.5 7.6h5" stroke="#8c8c8c" stroke-width="1.6"/></svg>
<svg class="abs" style="left:1155px;top:284px;overflow:visible" width="16" height="16" viewBox="0 0 16 16"><rect x="0.6" y="2.5" width="14.8" height="11" fill="#fff" stroke="#aaa" stroke-width="1.1"/><path d="M3 8.2l2.4-3.4 2.4 3.4z" fill="#5f8f7a"/><path d="M8.6 5l2.5 3.4L13.6 5z" fill="#ef8b3b"/><path d="M2.5 11.3h11" stroke="#c9a8b8" stroke-width="1.2"/></svg>
<svg class="abs" style="left:1015px;top:307px;overflow:visible" width="16" height="16" viewBox="0 0 16 16"><rect x="0.5" y="0.5" width="14" height="14.5" fill="#fff" stroke="#8c8c8c"/><rect x="0" y="0" width="15" height="2.2" fill="#3f78bf"/><path d="M3 5h2M3 8.5h2M3 12h2" stroke="#ef8b3b" stroke-width="1.4" opacity=".7"/><path d="M7.5 8h9l-3.4 4v4.4h-2.2V12z" fill="#555"/></svg>
<svg class="abs" style="left:1043px;top:307px;overflow:visible" width="16" height="16" viewBox="0 0 16 16"><rect x="0.5" y="0.5" width="14" height="15" fill="#fff" stroke="#8c8c8c"/><rect x="0" y="0" width="15" height="2.2" fill="#5a86bd"/><path d="M5 2v13.5M10 2v13.5" stroke="#8899b4" stroke-width="1"/><path d="M0.5 6.5h14M0.5 11h14" stroke="#b8c4d8" stroke-width="1"/><path d="M0.5 8.8h14" stroke="#f0c8a0" stroke-width=".8"/></svg>
<svg class="abs" style="left:1071px;top:307px;overflow:visible" width="16" height="16" viewBox="0 0 16 16"><rect x="0.5" y="0.5" width="14" height="15" fill="#fff" stroke="#8c8c8c"/><rect x="10" y="2" width="4.5" height="13.5" fill="#d5dbe6"/><rect x="0.5" y="11.5" width="14" height="4" fill="#d5dbe6"/><rect x="0" y="0" width="15" height="2.2" fill="#3f78bf"/><path d="M5 2v13.5M10 2v13.5" stroke="#9aa8be" stroke-width="1"/><path d="M0.5 6.5h14M0.5 11.3h14" stroke="#b8c4d8" stroke-width="1"/><path d="M0.5 9h10" stroke="#f0c0a0" stroke-width=".8"/></svg>
<svg class="abs" style="left:1099px;top:307px;overflow:visible" width="16" height="16" viewBox="0 0 16 16"><text x="-1.4" y="15.6" font-size="21.5" font-weight="bold" fill="#7da3c8" font-family="Liberation Sans, sans-serif">R</text></svg>
<svg class="abs" style="left:1127px;top:307px;overflow:visible" width="16" height="16" viewBox="0 0 16 16"><text x="-1.2" y="12.8" font-size="14.5" font-weight="bold" fill="#7da3c8" font-family="Liberation Sans, sans-serif" textLength="17.5">Py</text></svg>
<svg class="abs" style="left:1155px;top:307px;overflow:visible" width="16" height="16" viewBox="0 0 16 16"><rect x="2" y="7.4" width="1.8" height="1.8" fill="#222"/><rect x="8.2" y="7.4" width="1.8" height="1.8" fill="#222"/><rect x="14.4" y="7.4" width="1.8" height="1.8" fill="#222"/></svg>
<!-- VIS-END -->
<div class="abs" style="left:1006px;top:330px;width:179px;height:1px;background:#e1dfdd"></div>
<svg class="abs" style="left:1026px;top:338px" width="22" height="21" viewBox="0 0 22 21"><path d="M1.100 1.500h15.500" stroke="#222" stroke-width="1.200"/><g fill="none" stroke="#1a1a1a" stroke-width="1.300" stroke-dasharray="2 1.250"><rect x="1.700" y="4.600" width="18.800" height="6.200"/><rect x="1.700" y="13.900" width="18.800" height="6.200"/></g></svg>
<svg class="abs" style="left:1067px;top:338px" width="20" height="22" viewBox="0 0 20 22"><g fill="none" stroke="#222" stroke-width="1.400"><rect x="1.800" y="1.600" width="14" height="4.200" rx="1.600"/><path d="M15.800 3.700h2.700v4.800H9.500v2.700"/><rect x="7.200" y="11.200" width="4.600" height="9.300" rx="0.700"/></g></svg>
<div class="abs" style="left:1017px;top:362.5px;width:40px;height:4.5px;border-radius:2.5px;background:#e9c62b"></div>
<div class="vt" style="left:1017px;top:373.5px">值</div>
<div class="well" style="top:394px;padding-left:9px;height:28px;line-height:30px">在此处添加数据字段</div>
<div class="ph" style="left:1018.5px;top:435.5px">筛选器</div>
<div class="vt" style="left:1020px;top:472.5px">页面级筛选器</div>
<div class="well" style="top:493px;padding-left:7px;height:26px;line-height:28px">在此处添加数据字段</div>
<div class="vt" style="left:1020px;top:527px">报告级别筛选器</div>
<div class="well" style="top:547px;padding-left:7px;height:26px;line-height:28px">在此处添加数据字段</div>
<div class="ph" style="left:1018.5px;top:586.5px">钻取</div>
<div class="vt" style="left:1014px;top:623px">跨报表</div>
<div class="vt" style="left:1018px;top:647px">关</div>
<svg class="abs" style="left:1033px;top:647px" width="33" height="14" viewBox="0 0 33 14"><path d="M12 7h19" stroke="#333" stroke-width="1.6"/><circle cx="7" cy="7" r="5" fill="#fff" stroke="#333" stroke-width="1.6"/></svg>
<div class="vt" style="left:1014px;top:677px">保留所有筛选器</div>
<div class="vt" style="left:1018px;top:701px;height:5px;overflow:hidden">开</div>
<div class="abs" style="left:1052px;top:701px;width:12px;height:5px;overflow:hidden"><div style="width:12px;height:12px;border-radius:6px;background:#444"></div></div>
<div class="abs" style="left:1179px;top:366px;width:7px;height:297px;background:#cdcbc9;border-radius:3px"></div>
<div class="abs" style="left:1190px;top:210px;width:172px;height:30px;background:#fff;border:1px solid #d2d0ce;border-radius:2px;box-shadow:0 1px 1px rgba(0,0,0,.06)"></div>
<svg class="abs" style="left:1201px;top:215px" width="17" height="17" viewBox="0 0 17 17"><circle cx="10.2" cy="6.6" r="4.8" fill="none" stroke="#333" stroke-width="1.3"/><path d="M6.8 10.2L1.3 15.8" stroke="#333" stroke-width="1.4"/></svg>
<div class="vt" style="left:1226px;top:216.5px;font-size:13px;line-height:17px">搜索</div>
<div class="abs" style="left:1187px;top:244px;width:179px;height:1px;background:#e6e4e2"></div>
<svg class="abs" style="left:1189px;top:263px" width="14" height="9" viewBox="0 0 14 9"><path d="M1.2 7.6L7 1.8l5.8 5.8" fill="none" stroke="#333" stroke-width="1.2"/></svg>
<svg class="abs" style="left:1209px;top:262px" width="13" height="12" viewBox="0 0 13 12"><rect x="0.5" y="0.5" width="12" height="11" fill="#fff" stroke="#222"/><rect x="0" y="0" width="13" height="3" fill="#222"/><path d="M0 6h13M0 9h13M4.5 0v12M8.5 0v12" stroke="#222" stroke-width="1"/></svg>
<div class="vt" style="left:1234px;top:259.5px">批售数据</div>
<div class="cb" style="top:292px"></div>
<svg class="abs" style="left:1235px;top:291px" width="10" height="12" viewBox="0 0 10 12"><rect width="10" height="12" rx="1" fill="#1b1b1b"/><rect x="1.6" y="1.6" width="6.8" height="2.3" fill="#fff"/><g fill="#fff"><rect x="1.6" y="5.3" width="1.6" height="1.3"/><rect x="4.2" y="5.3" width="1.6" height="1.3"/><rect x="6.8" y="5.3" width="1.6" height="1.3"/><rect x="1.6" y="7.5" width="1.6" height="1.3"/><rect x="4.2" y="7.5" width="1.6" height="1.3"/><rect x="6.8" y="7.5" width="1.6" height="1.3"/><rect x="1.6" y="9.6" width="1.6" height="1.3"/><rect x="4.2" y="9.6" width="1.6" height="1.3"/><rect x="6.8" y="9.6" width="1.6" height="1.3"/></g></svg>
<div class="fld" style="top:291px">1销量合计</div>
<div class="cb" style="top:316px"></div>
<svg class="abs" style="left:1235px;top:315px" width="10" height="12" viewBox="0 0 10 12"><rect width="10" height="12" rx="1" fill="#1b1b1b"/><rect x="1.6" y="1.6" width="6.8" height="2.3" fill="#fff"/><g fill="#fff"><rect x="1.6" y="5.3" width="1.6" height="1.3"/><rect x="4.2" y="5.3" width="1.6" height="1.3"/><rect x="6.8" y="5.3" width="1.6" height="1.3"/><rect x="1.6" y="7.5" width="1.6" height="1.3"/><rect x="4.2" y="7.5" width="1.6" height="1.3"/><rect x="6.8" y="7.5" width="1.6" height="1.3"/><rect x="1.6" y="9.6" width="1.6" height="1.3"/><rect x="4.2" y="9.6" width="1.6" height="1.3"/><rect x="6.8" y="9.6" width="1.6" height="1.3"/></g></svg>
<div class="fld" style="top:315px">2.上月销量</div>
<div class="cb" style="top:340px"></div>
<svg class="abs" style="left:1235px;top:339px" width="10" height="12" viewBox="0 0 10 12"><rect width="10" height="12" rx="1" fill="#1b1b1b"/><rect x="1.6" y="1.6" width="6.8" height="2.3" fill="#fff"/><g fill="#fff"><rect x="1.6" y="5.3" width="1.6" height="1.3"/><rect x="4.2" y="5.3" width="1.6" height="1.3"/><rect x="6.8" y="5.3" width="1.6" height="1.3"/><rect x="1.6" y="7.5" width="1.6" height="1.3"/><rect x="4.2" y="7.5" width="1.6" height="1.3"/><rect x="6.8" y="7.5" width="1.6" height="1.3"/><rect x="1.6" y="9.6" width="1.6" height="1.3"/><rect x="4.2" y="9.6" width="1.6" height="1.3"/><rect x="6.8" y="9.6" width="1.6" height="1.3"/></g></svg>
<div class="fld" style="top:339px">3.销量环比</div>
<div class="cb" style="top:364px"></div>
<svg class="abs" style="left:1235px;top:363px" width="10" height="12" viewBox="0 0 10 12"><rect width="10" height="12" rx="1" fill="#1b1b1b"/><rect x="1.6" y="1.6" width="6.8" height="2.3" fill="#fff"/><g fill="#fff"><rect x="1.6" y="5.3" width="1.6" height="1.3"/><rect x="4.2" y="5.3" width="1.6" height="1.3"/><rect x="6.8" y="5.3" width="1.6" height="1.3"/><rect x="1.6" y="7.5" width="1.6" height="1.3"/><rect x="4.2" y="7.5" width="1.6" height="1.3"/><rect x="6.8" y="7.5" width="1.6" height="1.3"/><rect x="1.6" y="9.6" width="1.6" height="1.3"/><rect x="4.2" y="9.6" width="1.6" height="1.3"/><rect x="6.8" y="9.6" width="1.6" height="1.3"/></g></svg>
<div class="fld" style="top:363px">4.总销量</div>
<div class="cb" style="top:388px"></div>
<svg class="abs" style="left:1235px;top:387px" width="10" height="12" viewBox="0 0 10 12"><rect width="10" height="12" rx="1" fill="#1b1b1b"/><rect x="1.6" y="1.6" width="6.8" height="2.3" fill="#fff"/><g fill="#fff"><rect x="1.6" y="5.3" width="1.6" height="1.3"/><rect x="4.2" y="5.3" width="1.6" height="1.3"/><rect x="6.8" y="5.3" width="1.6" height="1.3"/><rect x="1.6" y="7.5" width="1.6" height="1.3"/><rect x="4.2" y="7.5" width="1.6" height="1.3"/><rect x="6.8" y="7.5" width="1.6" height="1.3"/><rect x="1.6" y="9.6" width="1.6" height="1.3"/><rect x="4.2" y="9.6" width="1.6" height="1.3"/><rect x="6.8" y="9.6" width="1.6" height="1.3"/></g></svg>
<div class="fld" style="top:387px">5.销量百分比</div>
<div class="cb" style="top:412px"></div>
<svg class="abs" style="left:1235px;top:411px" width="10" height="12" viewBox="0 0 10 12"><rect width="10" height="12" rx="1" fill="#1b1b1b"/><rect x="1.6" y="1.6" width="6.8" height="2.3" fill="#fff"/><g fill="#fff"><rect x="1.6" y="5.3" width="1.6" height="1.3"/><rect x="4.2" y="5.3" width="1.6" height="1.3"/><rect x="6.8" y="5.3" width="1.6" height="1.3"/><rect x="1.6" y="7.5" width="1.6" height="1.3"/><rect x="4.2" y="7.5" width="1.6" height="1.3"/><rect x="6.8" y="7.5" width="1.6" height="1.3"/><rect x="1.6" y="9.6" width="1.6" height="1.3"/><rect x="4.2" y="9.6" width="1.6" height="1.3"/><rect x="6.8" y="9.6" width="1.6" height="1.3"/></g></svg>
<div class="fld" style="top:411px">6.规模合计</div>
<div class="cb" style="top:436px"></div>
<div class="sig" style="top:434px">Σ</div>
<div class="fld" style="top:435px">车高</div>
<div class="cb" style="top:460px"></div>
<div class="sig" style="top:458px">Σ</div>
<div class="fld" style="top:459px">车宽</div>
<div class="cb" style="top:484px"></div>
<div class="fld" style="top:483px">车类</div>
<div class="cb" style="top:508px"></div>
<div class="fld" style="top:507px">车企</div>
<div class="cb" style="top:532px"></div>
<div class="fld" style="top:531px">车系</div>
<div class="cb" style="top:556px"></div>
<div class="fld" style="top:555px">车型</div>
<div class="cb" style="top:580px"></div>
<div class="sig" style="top:578px">Σ</div>
<div class="fld" style="top:579px">车长</div>
<div class="cb" style="top:604px"></div>
<div class="sig" style="top:602px">Σ</div>
<div class="fld" style="top:603px">规模</div>
<div class="cb" style="top:628px"></div>
<div class="fld" style="top:627px">级别</div>
<div class="cb" style="top:652px"></div>
<div class="sig" style="top:650px">Σ</div>
<div class="fld" style="top:651px">价格档</div>
<div class="cb" style="top:676px"></div>
<div class="fld" style="top:675px">品牌</div>
<div class="cb" style="top:700px"></div>
<div class="sig" style="top:698px">Σ</div>
<div class="fld" style="top:699px">销量</div>
<div class="abs" style="left:1360px;top:254px;width:6px;height:330px;background:#c8c6c4;border-radius:3px 0 0 3px"></div>
<!-- PANES-END -->
<div id="status">第<i>1</i>页<i>,</i>共<i>1</i>页</div>
<!-- overlays -->
<div class="abs" style="left:1356px;top:582px;width:12px;height:60px;background:#4b4e53;border-radius:3px 0 0 3px;border:1px solid #3a3c40"></div>
<div class="abs" style="left:1360px;top:588px;width:4px;height:49px;background:repeating-linear-gradient(180deg,rgba(75,78,83,0) 0,rgba(75,78,83,0) 2px,#4b4e53 2px,#4b4e53 3px),linear-gradient(180deg,#e8b02a 0,#d8b84a 35%,#8aa0b8 55%,#4a8ad8 100%)"></div>
<div class="abs" style="left:1250px;top:706px;width:116px;height:22px;background:#717171;color:#4e4e4e;font-size:11px;line-height:24px;padding-left:6px;white-space:nowrap;overflow:hidden">有可用更新(单击下载</div>
<div class="abs" style="left:1346px;top:678px;width:50px;height:50px;border-radius:25px;background:radial-gradient(circle at 45% 35%,#5fd87a 0,#3cc05a 45%,#2aa648 100%);border:2px solid #dcdcdc;box-shadow:0 0 1px #999"></div>
<div class="abs" style="left:1352.5px;top:694.5px;font-size:11.5px;line-height:16px;font-weight:bold;color:#f4fff6;white-space:nowrap;letter-spacing:.3px">85</div>
<div class="abs" style="left:1362px;top:686px;width:2px;height:2px;background:#dff5e4;border-radius:1px"></div>
<div id="taskbar">
<div class="abs" style="left:27px;top:5px;width:11px;height:3px;background:#cfcfd4;border-radius:2px 2px 0 0"></div>
<div class="abs" style="left:78px;top:3px;width:18px;height:12px;border-radius:9px;border:2px solid #e9c02a;border-left-color:#3f78c8;background:#4a86d8"></div>
<div class="abs" style="left:114px;top:1px;width:53px;height:7px;background:#8d6964;border:1px solid #a88984;border-bottom:none"></div>
<div class="abs" style="left:131px;top:5px;width:12px;height:3px;background:#c9b48a"></div>
<div class="abs" style="left:168px;top:1px;width:3px;height:7px;background:#8d6964;border-left:1px solid #a88984"></div>
<div class="abs" style="left:198px;top:4px;width:16px;height:8px;border-radius:8px 8px 0 0;background:#e9ece6"></div>
<div class="abs" style="left:207px;top:3px;width:8px;height:3px;background:#8cc63f;border-radius:2px"></div>
<div class="abs" style="left:252px;top:4px;width:32px;height:4px;background:#1f8a3c"></div>
<div class="abs" style="left:300px;top:1px;width:57px;height:7px;background:#8a6560;border:1px solid #a88984;border-bottom:none"></div>
<div class="abs" style="left:322px;top:5px;width:14px;height:14px;background:#5b9be0;transform:rotate(45deg);transform-origin:50% 50%"></div>
<div class="abs" style="left:362px;top:1px;width:58px;height:7px;background:#8a6560;border:1px solid #a88984;border-bottom:none"></div>
<div class="abs" style="left:380px;top:4px;width:22px;height:22px;border-radius:11px;background:#7fc41c"></div>
<div class="abs" style="left:424px;top:1px;width:58px;height:7px;background:linear-gradient(#ecd464,#efc41a);border:1px solid #f3e08c;border-bottom:none"></div>
<div class="abs" style="left:486px;top:1px;width:58px;height:7px;background:#8a6560;border:1px solid #a88984;border-bottom:none"></div>
<div class="abs" style="left:505px;top:4px;width:22px;height:22px;border-radius:11px;background:#f4f4f4"></div>
<div class="abs" style="left:745px;top:6px;width:6px;height:2px;background:#d8c8c4;opacity:.7"></div>
<div class="abs" style="left:786px;top:6px;width:24px;height:2px;background:#cdb8b4;opacity:.8"></div>
<div class="abs" style="left:1310px;top:6px;width:26px;height:2px;background:#d8c8c4;opacity:.8"></div>
</div>
</body>
</html>
